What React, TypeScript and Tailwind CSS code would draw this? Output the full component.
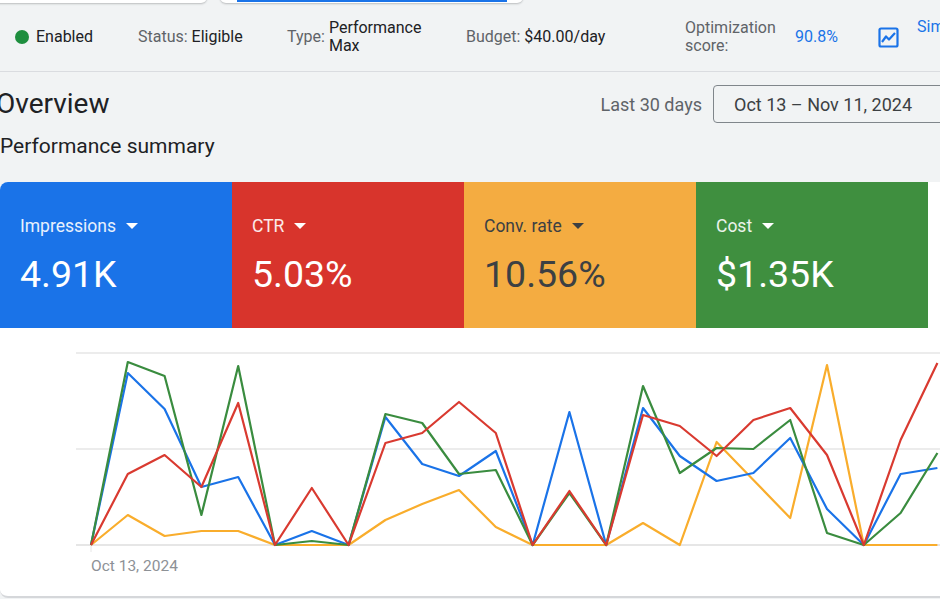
import React from "react";

const X0 = 91;
const DX = 36.8;
const TOP = 328;

const blue = [545,373,409,487,477,545,531,545,417,464,476,451,545,412,545,408,456,481,473,438,509,545,474,468];
const green = [545,362,376,515,366,545,541,545,414,423,474,470,545,493,545,386,473,448,449,420,533,545,513,453];
const red = [545,474,455,487,403,545,488,545,443,433,402,433,545,491,545,415,426,456,420,408,455,545,440,363];
const orange = [545,515,536,531,531,545,545,545,520,504,490,527,545,545,545,523,545,442,480,518,365,545,545,545];

function pts(arr: number[]) {
  return arr.map((y, i) => `${(X0 + i * DX).toFixed(1)},${y - TOP}`).join(" ");
}

function Caret({ dark }: { dark?: boolean }) {
  return (
    <svg width="12" height="6" viewBox="0 0 12 6" className="ml-[10px]">
      <path d="M0 0 L12 0 L6 6 Z" fill={dark ? "#3c4043" : "#ffffff"} />
    </svg>
  );
}

function Card({ label, value, bg, dark }: { label: string; value: string; bg: string; dark?: boolean }) {
  return (
    <div className={`w-[232px] shrink-0 h-[146px] ${bg} pl-[20px] pt-[34px] ${dark ? "text-[#3c4043]" : "text-white"}`}>
      <div className="flex items-center h-[20px] text-[17.5px] leading-[20px]">
        <span className={dark ? "text-[#3c4043]" : "text-white/90"}>{label}</span>
        <Caret dark={dark} />
      </div>
      <div className="mt-[16px] text-[37.5px] leading-[44px] font-normal">{value}</div>
    </div>
  );
}

export default function App() {
  return (
    <div className="w-[940px] h-[599px] bg-[#f1f3f4] overflow-hidden font-['Roboto',sans-serif] text-[#3c4043]">
      {/* top tabs */}
      <div className="relative h-0">
        <div className="absolute left-[-10px] top-[-6px] w-[217px] h-[9px] bg-white rounded-b-[6px] shadow-[0_1px_2px_rgba(60,64,67,0.3)]" />
        <div className="absolute left-[220px] top-[-6px] w-[303px] h-[9px] bg-white rounded-b-[6px] shadow-[0_1px_2px_rgba(60,64,67,0.3)] overflow-hidden">
          <div className="ml-[17px] mt-[5px] w-[270px] h-[3px] bg-[#1a73e8]" />
        </div>
      </div>

      {/* status bar */}
      <div className="h-[72px] pt-[3px] border-b border-[#dadce0] flex items-center text-[16px] leading-[18px] overflow-hidden">
        <div className="w-[138px] shrink-0 flex items-center pl-[15px]">
          <span className="w-[14px] h-[14px] rounded-full bg-[#1e8e3e] mr-[7px]" />
          <span className="text-[#202124]">Enabled</span>
        </div>
        <div className="w-[149px] shrink-0">
          <span className="text-[#5f6368]">Status: </span>
          <span className="text-[#202124]">Eligible</span>
        </div>
        <div className="w-[179px] shrink-0 flex items-center">
          <span className="text-[#5f6368] mr-[4px]">Type:</span>
          <span className="text-[#202124]">Performance<br />Max</span>
        </div>
        <div className="w-[219px] shrink-0">
          <span className="text-[#5f6368]">Budget: </span>
          <span className="text-[#202124]">$40.00/day</span>
        </div>
        <div className="w-[110px] shrink-0 text-[#5f6368]">Optimization<br />score:</div>
        <div className="w-[83px] shrink-0 text-[#1a73e8]">90.8%</div>
        <div className="w-[39px] shrink-0 flex items-center">
          <svg width="21" height="21" viewBox="0 0 21 21">
            <rect x="1.5" y="1.5" width="18" height="18" rx="1.5" fill="none" stroke="#1a73e8" strokeWidth="2.2" />
            <polyline points="4,15 8,9.5 11,12.5 17,6" fill="none" stroke="#1a73e8" strokeWidth="2.2" strokeLinejoin="round" />
          </svg>
        </div>
        <div className="shrink-0 self-start mt-[15px] text-[#1a73e8] whitespace-nowrap text-[16px]">Simulate</div>
      </div>

      {/* overview header */}
      <div className="pt-[13px] flex items-center h-[51px]">
        <div className="ml-[-4px] text-[28px] leading-[38px] text-[#202124]">Overview</div>
        <div className="ml-auto flex items-center">
          <span className="text-[18px] text-[#5f6368] mr-[11px]">Last 30 days</span>
          <div className="w-[240px] h-[38px] border border-[#80868b] rounded-[4px] pl-[20px] flex items-center text-[18px] text-[#3c4043] mr-[-13px]">
            Oct 13 – Nov 11, 2024
          </div>
        </div>
      </div>
      <div className="mt-[11px] h-[24px] leading-[24px] text-[21px] text-[#202124]">Performance summary</div>

      {/* panel */}
      <div className="mt-[24px] w-[960px] h-[416px] bg-white rounded-[8px] border-b-2 border-[#d5d7da] overflow-hidden">
        <div className="flex">
          <Card label="Impressions" value="4.91K" bg="bg-[#1a73e8]" />
          <Card label="CTR" value="5.03%" bg="bg-[#d8342c]" />
          <Card label="Conv. rate" value="10.56%" bg="bg-[#f4ac41]" dark />
          <Card label="Cost" value="$1.35K" bg="bg-[#3f8f3f]" />
        </div>
        <div className="relative h-[269px]">
          <svg width="960" height="269" className="block">
            <line x1="76" y1="25" x2="960" y2="25" stroke="#ececec" strokeWidth="2" />
            <line x1="76" y1="121" x2="960" y2="121" stroke="#ececec" strokeWidth="2" />
            <line x1="76" y1="217" x2="960" y2="217" stroke="#e6e6e6" strokeWidth="2" />
            <line x1="91" y1="218" x2="91" y2="224" stroke="#e6e6e6" strokeWidth="1" />
            <polyline points={pts(orange)} fill="none" stroke="#f9ad2c" strokeWidth="2.2" strokeLinejoin="round" />
            <polyline points={pts(blue)} fill="none" stroke="#1a73e8" strokeWidth="2.2" strokeLinejoin="round" />
            <polyline points={pts(green)} fill="none" stroke="#3a8c3f" strokeWidth="2.2" strokeLinejoin="round" />
            <polyline points={pts(red)} fill="none" stroke="#d93a30" strokeWidth="2.2" strokeLinejoin="round" />
          </svg>
          <div className="absolute left-[91px] top-[229px] text-[15.5px] leading-[18px] text-[#8d9196]">Oct 13, 2024</div>
        </div>
      </div>
    </div>
  );
}
